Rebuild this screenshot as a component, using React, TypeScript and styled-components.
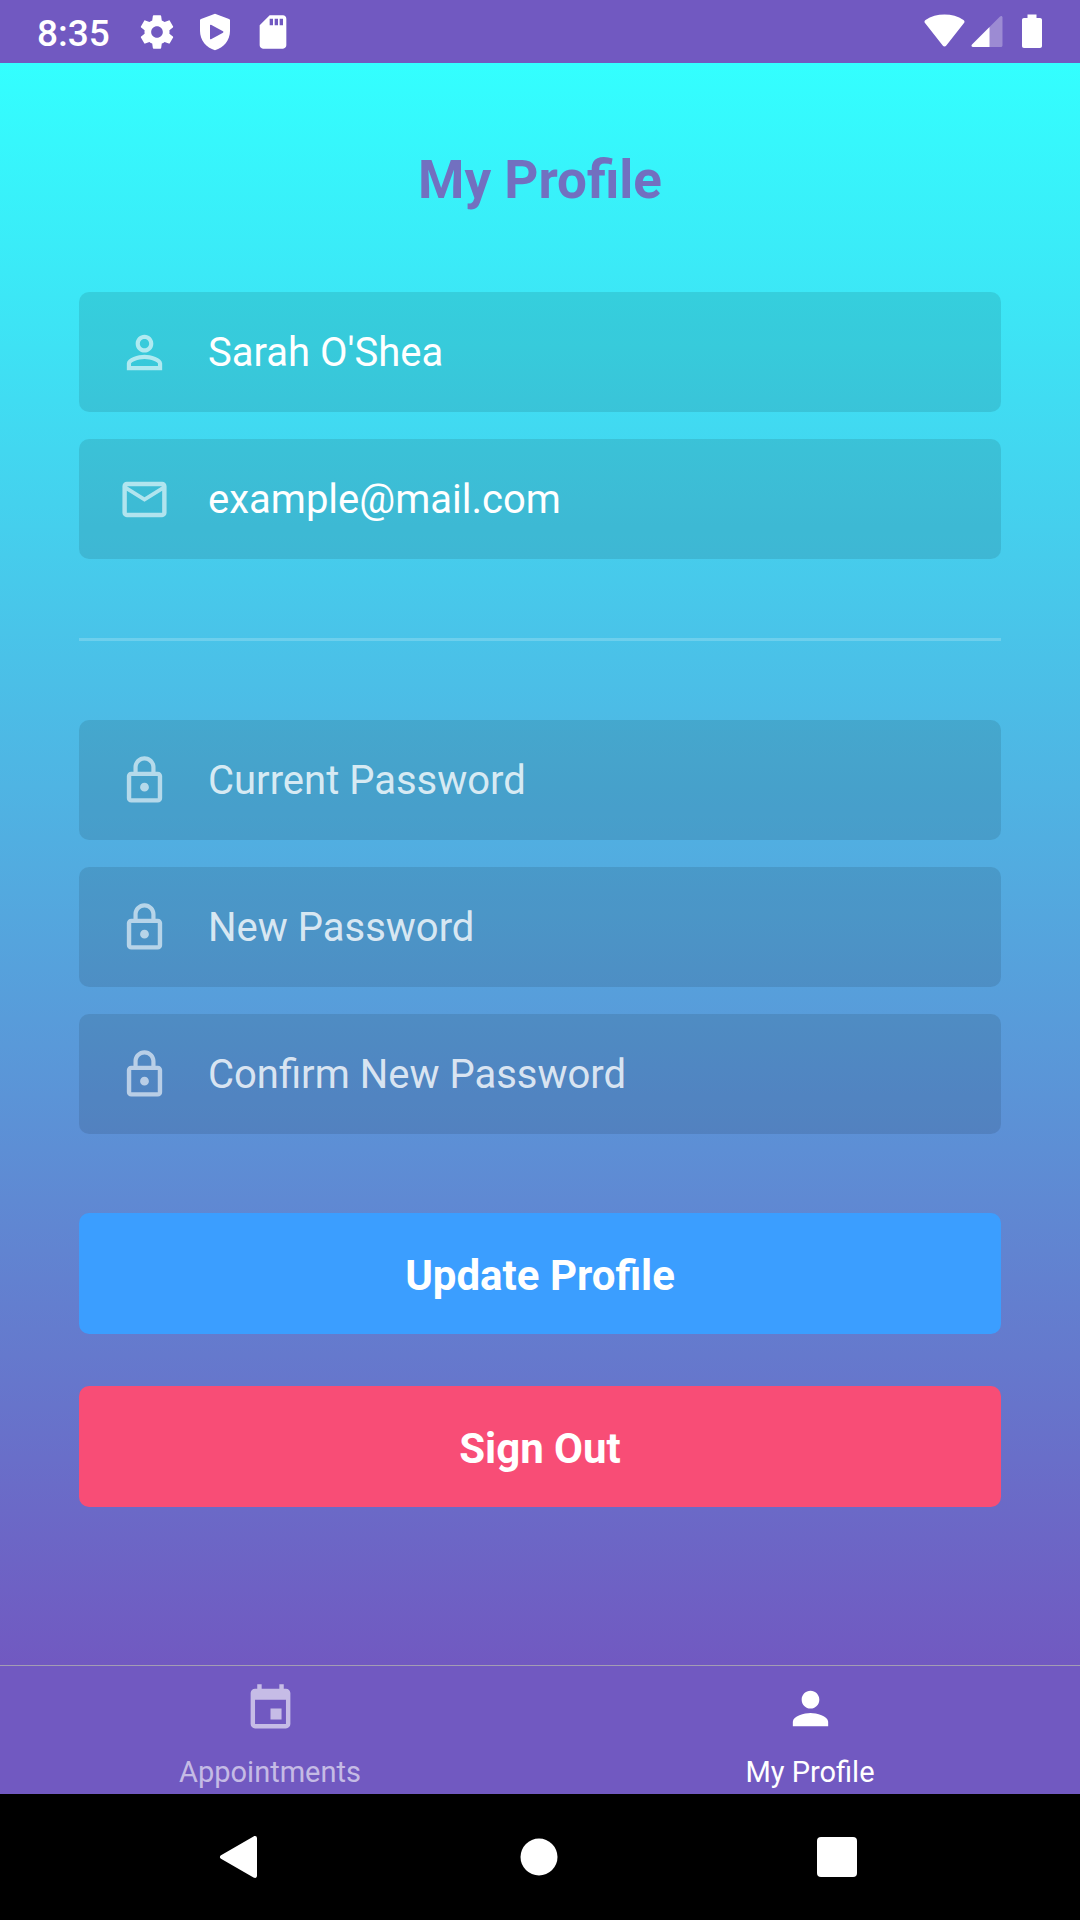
import React from "react";
import styled, { createGlobalStyle, css } from "styled-components";

const GlobalStyle = createGlobalStyle`
  * { box-sizing: border-box; }
  body {
    margin: 0;
    background: #000;
    font-family: Roboto, "Noto Sans", sans-serif;
    -webkit-font-smoothing: antialiased;
  }
  button, input { font-family: inherit; }
`;

const Screen = styled.div`
  min-height: 100vh;
  display: flex;
  flex-direction: column;
`;

const StatusBar = styled.header`
  height: 63px;
  padding: 0 38px 0 37px;
  display: flex;
  align-items: center;
  justify-content: space-between;
  background: #7159c1;
  color: #fff;
`;

const StatusGroup = styled.div<{ $gap: number }>`
  display: flex;
  align-items: center;
  gap: ${({ $gap }) => $gap}px;
`;

const Clock = styled.time`
  margin-right: 9px;
  padding-top: 4px;
  font-size: 37px;
  line-height: 44px;
  font-weight: 500;
`;

const Glyph = styled.svg`
  display: block;
  flex: none;
  fill: currentColor;
`;

const Content = styled.main`
  flex: 1;
  display: flex;
  flex-direction: column;
  padding: 86px 79px 79px;
  background: linear-gradient(to bottom, #33ffff, #7159c1);
`;

const Title = styled.h1`
  margin: 0 0 81px;
  font-size: 53px;
  line-height: 62px;
  font-weight: 700;
  text-align: center;
  color: #7270c0;
`;

const Form = styled.form`
  display: flex;
  flex-direction: column;
`;

const FieldGroup = styled.div`
  display: flex;
  flex-direction: column;
  gap: 27px;
`;

const Field = styled.label`
  height: 120px;
  padding: 0 39px;
  display: flex;
  align-items: center;
  gap: 37px;
  border-radius: 10px;
  background: rgba(0, 0, 0, 0.1);
  color: rgba(255, 255, 255, 0.6);
`;

const TextInput = styled.input`
  flex: 1;
  min-width: 0;
  padding: 2px 0 0;
  border: 0;
  outline: 0;
  background: transparent;
  font-size: 40px;
  line-height: 48px;
  color: #fff;

  &::placeholder {
    color: rgba(255, 255, 255, 0.8);
    opacity: 1;
  }
`;

const Divider = styled.hr`
  width: 100%;
  height: 3px;
  margin: 79px 0;
  border: 0;
  background: rgba(255, 255, 255, 0.2);
`;

const ActionButton = styled.button<{ $color: string; $space: number }>`
  width: 100%;
  height: 121px;
  margin-top: ${({ $space }) => $space}px;
  padding: 4px 0 0;
  border: 0;
  border-radius: 10px;
  background: ${({ $color }) => $color};
  color: #fff;
  font-size: 42px;
  line-height: 50px;
  font-weight: 700;
`;

const TabBar = styled.nav`
  display: grid;
  grid-template-columns: 1fr 1fr;
  border-top: 1px solid #a39db3;
  background: #7159c1;
`;

const Tab = styled.a<{ $active?: boolean }>`
  height: 128px;
  padding-top: 16px;
  display: flex;
  flex-direction: column;
  align-items: center;
  gap: 20px;
  font-size: 29px;
  line-height: 34px;
  text-decoration: none;
  color: rgba(255, 255, 255, 0.6);
  ${({ $active }) =>
    $active &&
    css`
      color: #fff;
    `}
`;

const SystemBar = styled.footer`
  height: 126px;
  padding: 0 92px 0 90px;
  display: grid;
  grid-template-columns: repeat(3, 1fr);
  place-items: center;
  background: #000;
`;

const SystemButton = styled.button`
  padding: 12px;
  border: 0;
  background: transparent;
  color: #fff;
`;

const paths = {
  person:
    "M12 5.9c1.16 0 2.1.94 2.1 2.1s-.94 2.1-2.1 2.1S9.9 9.16 9.9 8s.94-2.1 2.1-2.1m0 9c2.97 0 6.1 1.46 6.1 2.1v1.1H5.9V17c0-.64 3.13-2.1 6.1-2.1M12 4C9.79 4 8 5.79 8 8s1.79 4 4 4 4-1.79 4-4-1.79-4-4-4zm0 9c-2.67 0-8 1.34-8 4v3h16v-3c0-2.66-5.33-4-8-4z",
  personFilled:
    "M12 12c2.21 0 4-1.79 4-4s-1.79-4-4-4-4 1.79-4 4 1.79 4 4 4zm0 2c-2.67 0-8 1.34-8 4v2h16v-2c0-2.66-5.33-4-8-4z",
  mail: "M20 4H4c-1.1 0-1.99.9-1.99 2L2 18c0 1.1.9 2 2 2h16c1.1 0 2-.9 2-2V6c0-1.1-.9-2-2-2zm0 14H4V8l8 5 8-5v10zm-8-7L4 6h16l-8 5z",
  lock: "M12 17c1.1 0 2-.9 2-2s-.9-2-2-2-2 .9-2 2 .9 2 2 2zm6-9h-1V6c0-2.76-2.24-5-5-5S7 3.24 7 6v2H6c-1.1 0-2 .9-2 2v10c0 1.1.9 2 2 2h12c1.1 0 2-.9 2-2V10c0-1.1-.9-2-2-2zM8.9 6c0-1.71 1.39-3.1 3.1-3.1s3.1 1.39 3.1 3.1v2H8.9V6zM18 20H6V10h12v10z",
  event:
    "M17 12h-5v5h5v-5zM16 1v2H8V1H6v2H5c-1.11 0-1.99.9-1.99 2L3 19c0 1.1.89 2 2 2h14c1.1 0 2-.9 2-2V5c0-1.1-.9-2-2-2h-1V1h-2zm3 18H5V8h14v11z",
  settings:
    "M19.43 12.98c.04-.32.07-.64.07-.98s-.03-.66-.07-.98l2.11-1.65c.19-.15.24-.42.12-.64l-2-3.46c-.12-.22-.39-.3-.61-.22l-2.49 1c-.52-.4-1.08-.73-1.69-.98l-.38-2.65C14.46 2.18 14.25 2 14 2h-4c-.25 0-.46.18-.49.42l-.38 2.65c-.61.25-1.17.59-1.69.98l-2.49-1c-.23-.09-.49 0-.61.22l-2 3.46c-.13.22-.07.49.12.64l2.11 1.65c-.04.32-.07.65-.07.98s.03.66.07.98l-2.11 1.65c-.19.15-.24.42-.12.64l2 3.46c.12.22.39.3.61.22l2.49-1c.52.4 1.08.73 1.69.98l.38 2.65c.03.24.24.42.49.42h4c.25 0 .46-.18.49-.42l.38-2.65c.61-.25 1.17-.59 1.69-.98l2.49 1c.23.09.49 0 .61-.22l2-3.46c.12-.22.07-.49-.12-.64l-2.11-1.65zM12 15.5c-1.93 0-3.5-1.57-3.5-3.5s1.57-3.5 3.5-3.5 3.5 1.57 3.5 3.5-1.57 3.5-3.5 3.5z",
  shield:
    "M12 1.1L20.4 4.2c.4.2.6.4.6.8v6.4C21 16.8 17.2 21.6 12 22.9 6.8 21.6 3 16.8 3 11.4V5c0-.4.2-.6.6-.8L12 1.1zM9 8v8c0 .3.3.4.6.3l7.2-3.900c.3-.2.3-.6 0-.8L9.600 7.700C9.300 7.600 9 7.700 9 8z",
  sdCard:
    "M18 2h-8L4 8v12c0 1.100.9 2 2 2h12c1.100 0 2-.9 2-2V4c0-1.100-.9-2-2-2zm-6 6h-2V4h2v4zm3 0h-2V4h2v4zm3 0h-2V4h2v4z",
};

type IconProps = { name: keyof typeof paths; size: number };

const Icon = ({ name, size }: IconProps) => (
  <Glyph width={size} height={size} viewBox="0 0 24 24" fillRule="evenodd" aria-hidden="true">
    <path d={paths[name]} />
  </Glyph>
);

const passwordFields = ["Current Password", "New Password", "Confirm New Password"];

export default function App() {
  return (
    <Screen>
      <GlobalStyle />
      <StatusBar>
        <StatusGroup $gap={18}>
          <Clock>8:35</Clock>
          <Icon name="settings" size={40} />
          <Icon name="shield" size={40} />
          <Icon name="sdCard" size={40} />
        </StatusGroup>
        <StatusGroup $gap={0}>
          <Glyph width="118" height="36" viewBox="0 0 118 36" aria-hidden="true">
            <path d="M1.2 9.2C.1 8.2.3 6.8 1.5 6 7 2.2 13.5.5 20.5.5S34 2.2 39.5 6c1.2.8 1.4 2.2.3 3.2L22.3 31.6c-1 1.2-2.6 1.2-3.6 0z" />
            <path d="M76 2.5c1.2-1.1 2.5-.6 2.5 1V31c0 1.5-.5 2-2 2H65V13.5z" opacity=".3" />
            <path d="M65.5 13V33H49c-1.5 0-2-1.5-1-2.5z" />
            <path d="M103.5.5h9V4h3.5c1.2 0 2 .8 2 2v26c0 1.2-.8 2-2 2h-16c-1.2 0-2-.8-2-2V6c0-1.2.8-2 2-2h3.5z" />
          </Glyph>
        </StatusGroup>
      </StatusBar>

      <Content>
        <Title>My Profile</Title>
        <Form onSubmit={(event) => event.preventDefault()}>
          <FieldGroup>
            <Field>
              <Icon name="person" size={53} />
              <TextInput type="text" aria-label="Full name" defaultValue="Sarah O'Shea" />
            </Field>
            <Field>
              <Icon name="mail" size={53} />
              <TextInput type="email" aria-label="Email" defaultValue="example@mail.com" />
            </Field>
          </FieldGroup>
          <Divider />
          <FieldGroup>
            {passwordFields.map((label) => (
              <Field key={label}>
                <Icon name="lock" size={53} />
                <TextInput type="password" aria-label={label} placeholder={label} />
              </Field>
            ))}
          </FieldGroup>
          <ActionButton type="submit" $color="#3b9eff" $space={79}>
            Update Profile
          </ActionButton>
          <ActionButton type="button" $color="#f84d76" $space={52}>
            Sign Out
          </ActionButton>
        </Form>
      </Content>

      <TabBar>
        <Tab href="#appointments">
          <Icon name="event" size={53} />
          Appointments
        </Tab>
        <Tab href="#profile" $active>
          <Icon name="personFilled" size={53} />
          My Profile
        </Tab>
      </TabBar>

      <SystemBar>
        <SystemButton aria-label="Back">
          <Glyph width="42" height="42" viewBox="0 0 42 42">
            <path d="M2 19.2L34.5.5C36.5-.5 38 .2 38 2.5v37c0 2.3-1.5 3-3.5 2L2 22.8c-1.5-1-1.5-2.6 0-3.6z" />
          </Glyph>
        </SystemButton>
        <SystemButton aria-label="Home">
          <Glyph width="42" height="42" viewBox="0 0 42 42">
            <circle cx="21" cy="21" r="18.5" />
          </Glyph>
        </SystemButton>
        <SystemButton aria-label="Recent apps">
          <Glyph width="42" height="42" viewBox="0 0 42 42">
            <rect x="0" y="1" width="40" height="40" rx="4" />
          </Glyph>
        </SystemButton>
      </SystemBar>
    </Screen>
  );
}
